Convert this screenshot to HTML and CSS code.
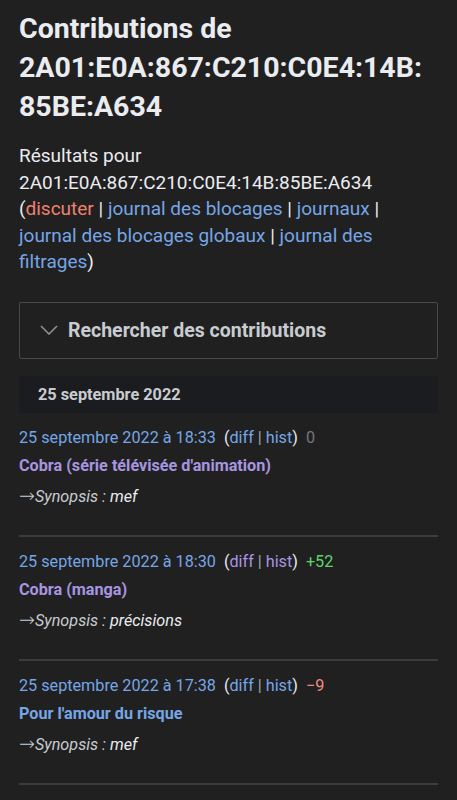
FILE: index.html
```html
<!DOCTYPE html>
<html lang="fr">
<head>
<meta charset="utf-8">
<link rel="stylesheet" href="styles.css">
</head>
<body>
<main class="page">
  <h1 class="title">Contributions de 2A01:E0A:867:C210:C0E4:14B:<wbr>85BE:A634</h1>
  <p class="intro">Résultats pour 2A01:E0A:867:C210:C0E4:14B:85BE:A634 (<a class="new">discuter</a> | <a>journal des blocages</a> | <a>journaux</a> | <a>journal des blocages globaux</a> | <a>journal des filtrages</a>)</p>

  <div class="search">
    <svg class="chev" width="18" height="10" viewBox="0 0 18 10"><path d="M1 1 L9 9 L17 1" fill="none" stroke="#8c8f94" stroke-width="1.6"/></svg>
    <span class="search-label">Rechercher des contributions</span>
  </div>

  <div class="day">25 septembre 2022</div>

  <ul class="list">
    <li class="entry">
      <div class="meta"><a class="date">25 septembre 2022 à 18:33</a> <span class="paren">(<a>diff</a> <span class="sep">|</span> <a>hist</a>)</span> <span class="size zero">0</span></div>
      <a class="page-title visited">Cobra (série télévisée d'animation)</a>
      <div class="comment"><span class="arrow">→</span>Synopsis : <span class="c">mef</span></div>
    </li>
    <li class="entry">
      <div class="meta"><a class="date">25 septembre 2022 à 18:30</a> <span class="paren">(<a class="vis">diff</a> <span class="sep">|</span> <a class="vis">hist</a>)</span> <span class="size pos">+52</span></div>
      <a class="page-title visited">Cobra (manga)</a>
      <div class="comment"><span class="arrow">→</span>Synopsis : <span class="c">précisions</span></div>
    </li>
    <li class="entry">
      <div class="meta"><a class="date">25 septembre 2022 à 17:38</a> <span class="paren">(<a>diff</a> <span class="sep">|</span> <a>hist</a>)</span> <span class="size neg">−9</span></div>
      <a class="page-title">Pour l'amour du risque</a>
      <div class="comment"><span class="arrow">→</span>Synopsis : <span class="c">mef</span></div>
    </li>
  </ul>
</main>
</body>
</html>
```

FILE: styles.css
```css
html, body {
  margin: 0;
  padding: 0;
  background: #202020;
}
body {
  font-family: Roboto, "Noto Sans", sans-serif;
  color: #eaecf0;
}
.page {
  padding: 9px 19px 0;
}
.title {
  margin: 0;
  font-size: 28.5px;
  font-weight: 700;
  line-height: 39px;
  color: #eaecf0;
}
.intro {
  margin: 17px 0 0;
  font-size: 19px;
  line-height: 26.5px;
  color: #eaecf0;
}
a {
  color: #76a6e6;
  text-decoration: none;
}
a.new {
  color: #f0806f;
}
.search {
  margin-top: 26px;
  height: 55px;
  border: 1px solid #48494d;
  border-radius: 2px;
  display: flex;
  align-items: center;
  padding-left: 20px;
  gap: 10px;
}
.chev {
  display: block;
}
.search-label {
  font-size: 19.5px;
  font-weight: 700;
  color: #c8ccd1;
}
.day {
  margin-top: 17px;
  height: 37px;
  background: #1b1c1f;
  display: flex;
  align-items: center;
  padding-left: 19px;
  font-size: 16.3px;
  font-weight: 700;
  color: #c8ccd1;
}
.list {
  list-style: none;
  margin: 0;
  padding: 0;
}
.entry {
  margin-top: 13px;
  padding-bottom: 26px;
  border-bottom: 2px solid #3b3c3e;
}
.meta {
  font-size: 16.2px;
  line-height: 24px;
  color: #eaecf0;
}
.paren {
  margin-left: 4px;
}
.sep {
  color: #a2a9b1;
}
.size {
  margin-left: 4px;
}
.zero { color: #72777d; }
.pos { color: #5fd36e; }
.neg { color: #ee8c80; }
.vis, .visited { color: #a795e0; }
.page-title {
  display: block;
  margin-top: 4px;
  font-size: 16.2px;
  font-weight: 700;
  line-height: 24px;
}
.comment {
  margin-top: 7px;
  font-size: 16.2px;
  line-height: 24px;
  height: 24px;
  font-style: italic;
  color: #c8ccd1;
}
.arrow {
  font-family: "DejaVu Sans", sans-serif;
  font-weight: 200;
  font-style: normal;
  font-size: 19px;
  line-height: 1;
}
.comment .c {
  color: #eaecf0;
}
```
